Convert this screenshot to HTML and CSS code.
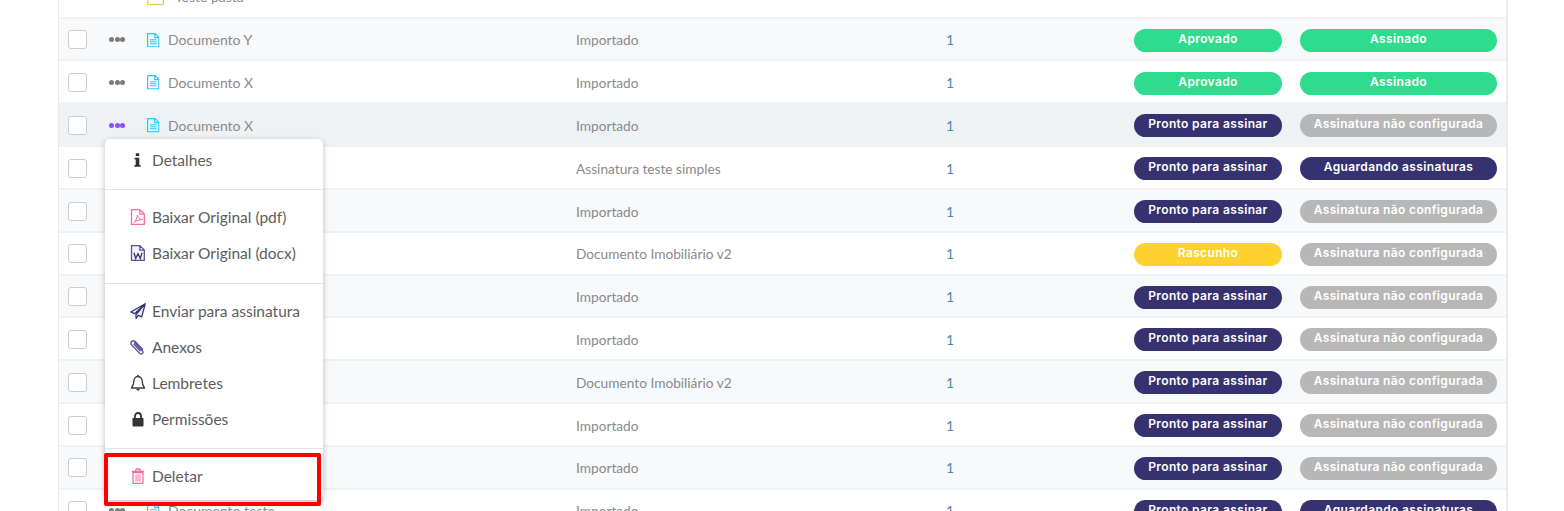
FILE: index.html
```html
<!DOCTYPE html>
<html lang="pt-BR">
<head>
    <meta charset="UTF-8">
    <title>Documentos</title>
    <link rel="stylesheet" href="styles.css">
</head>
<body>
    <svg class="defs" width="0" height="0">
        <symbol id="doc" viewBox="0 0 12.500 14.500">
            <path d="M.6.6h7.500l3.800 3.800v9.500H.6z M7.800.6v4.100h4.100" fill="none" stroke="#22c9ff" stroke-width="1.200"/>
            <path d="M3 6.800h6.500M3 8.800h6.500M3 10.800h6.500" stroke="#22c9ff" stroke-width="1.100"/>
        </symbol>
    </svg>

    <div class="table">
        <div class="row">
            <span></span><span class="dots"><i></i><i></i><i></i></span>
            <span class="name">
                <svg class="ficon folder" viewBox="0 0 17 16"><path d="M.7 1.500h5l1.500 2h9.100v11a1 1 0 0 1-1 1H1.700a1 1 0 0 1-1-1z" fill="#fff" stroke="#f3c14f" stroke-width="1.200"/></svg>
                Teste pasta
            </span>
            <span class="model"></span><span class="ver"></span><span></span><span></span>
        </div>
        <div class="row">
            <span class="check"></span><span class="dots"><i></i><i></i><i></i></span>
            <span class="name"><svg class="ficon"><use href="#doc"/></svg>Documento Y</span>
            <span class="model">Importado</span><span class="ver">1</span>
            <span class="pill green">Aprovado</span><span class="pill green">Assinado</span>
        </div>
        <div class="row">
            <span class="check"></span><span class="dots"><i></i><i></i><i></i></span>
            <span class="name"><svg class="ficon"><use href="#doc"/></svg>Documento X</span>
            <span class="model">Importado</span><span class="ver">1</span>
            <span class="pill green">Aprovado</span><span class="pill green">Assinado</span>
        </div>
        <div class="row active">
            <span class="check"></span><span class="dots"><i></i><i></i><i></i></span>
            <span class="name"><svg class="ficon"><use href="#doc"/></svg>Documento X</span>
            <span class="model">Importado</span><span class="ver">1</span>
            <span class="pill navy">Pronto para assinar</span><span class="pill gray">Assinatura não configurada</span>
        </div>
        <div class="row">
            <span class="check"></span><span class="dots"><i></i><i></i><i></i></span>
            <span class="name"></span>
            <span class="model">Assinatura teste simples</span><span class="ver">1</span>
            <span class="pill navy">Pronto para assinar</span><span class="pill navy">Aguardando assinaturas</span>
        </div>
        <div class="row">
            <span class="check"></span><span class="dots"><i></i><i></i><i></i></span>
            <span class="name"></span>
            <span class="model">Importado</span><span class="ver">1</span>
            <span class="pill navy">Pronto para assinar</span><span class="pill gray">Assinatura não configurada</span>
        </div>
        <div class="row">
            <span class="check"></span><span class="dots"><i></i><i></i><i></i></span>
            <span class="name"></span>
            <span class="model">Documento Imobiliário v2</span><span class="ver">1</span>
            <span class="pill yellow">Rascunho</span><span class="pill gray">Assinatura não configurada</span>
        </div>
        <div class="row">
            <span class="check"></span><span class="dots"><i></i><i></i><i></i></span>
            <span class="name"></span>
            <span class="model">Importado</span><span class="ver">1</span>
            <span class="pill navy">Pronto para assinar</span><span class="pill gray">Assinatura não configurada</span>
        </div>
        <div class="row">
            <span class="check"></span><span class="dots"><i></i><i></i><i></i></span>
            <span class="name"></span>
            <span class="model">Importado</span><span class="ver">1</span>
            <span class="pill navy">Pronto para assinar</span><span class="pill gray">Assinatura não configurada</span>
        </div>
        <div class="row">
            <span class="check"></span><span class="dots"><i></i><i></i><i></i></span>
            <span class="name"></span>
            <span class="model">Documento Imobiliário v2</span><span class="ver">1</span>
            <span class="pill navy">Pronto para assinar</span><span class="pill gray">Assinatura não configurada</span>
        </div>
        <div class="row">
            <span class="check"></span><span class="dots"><i></i><i></i><i></i></span>
            <span class="name"></span>
            <span class="model">Importado</span><span class="ver">1</span>
            <span class="pill navy">Pronto para assinar</span><span class="pill gray">Assinatura não configurada</span>
        </div>
        <div class="row">
            <span class="check"></span><span class="dots"><i></i><i></i><i></i></span>
            <span class="name"></span>
            <span class="model">Importado</span><span class="ver">1</span>
            <span class="pill navy">Pronto para assinar</span><span class="pill gray">Assinatura não configurada</span>
        </div>
        <div class="row">
            <span class="check"></span><span class="dots"><i></i><i></i><i></i></span>
            <span class="name"><svg class="ficon"><use href="#doc"/></svg>Documento teste</span>
            <span class="model">Importado</span><span class="ver">1</span>
            <span class="pill navy">Pronto para assinar</span><span class="pill navy">Aguardando assinaturas</span>
        </div>

        <!-- Row action menu -->
        <div class="menu">
            <div class="group first">
                <a class="item">
                    <svg class="micon" viewBox="0 0 16 16"><path d="M5.800 1.200h3.400v2.900H5.800z M4.600 5.800h4.700v7.200h1.300v1.800H4.400V13h1.300V7.600H4.600z" fill="#2f2f2f"/></svg>
                    Detalhes
                </a>
            </div>
            <div class="group second">
                <a class="item">
                    <svg class="micon" viewBox="0 0 16 16"><path d="M1.500.6h8.300l4.500 4.500v10.300H1.500z M9.800.6v4.500h4.500" fill="none" stroke="#f76c9c" stroke-width="1.300"/><path d="M3.800 13.300c2-1 3.700-4.800 3.500-7.300 0 3 2.700 4.600 5.200 4.600-3 0-6.200 1.100-8.700 2.700z" fill="none" stroke="#f76c9c" stroke-width="1"/></svg>
                    Baixar Original (pdf)
                </a>
                <a class="item">
                    <svg class="micon" viewBox="0 0 16 16"><path d="M1.500.6h8.300l4.500 4.500v10.300H1.500z M9.800.6v4.500h4.500" fill="#f3f2fa" stroke="#56559a" stroke-width="1.300"/><path d="M4 7.800l1.700 5.700L8 8.800l2.300 4.700L12 7.800" fill="none" stroke="#35336f" stroke-width="1.300"/></svg>
                    Baixar Original (docx)
                </a>
            </div>
            <div class="group third">
                <a class="item">
                    <svg class="micon" viewBox="0 0 16 16"><path d="M15.300.7L.7 9l4 1.700L15.300.7 6 11.700v3.600l2.400-2.900 3.300 1.400z" fill="#eeeef8" stroke="#35336f" stroke-width="1.300" stroke-linejoin="round"/></svg>
                    Enviar para assinatura
                </a>
                <a class="item">
                    <svg class="micon" viewBox="0 0 16 16"><path d="M4.500 3.500l8 8.500c1.500 1.700-1 4-2.700 2.400L1.700 6C-.5 3.700 2.800.2 5.200 2.500l7.300 7.800M4 5.200l6.200 6.600" fill="none" stroke="#5a5a9c" stroke-width="1.400" stroke-linecap="round"/></svg>
                    Anexos
                </a>
                <a class="item">
                    <svg class="micon" viewBox="0 0 16 16"><path d="M8 1.500c-3 0-4.200 2.400-4.200 5 0 3-1 4.500-2.300 6.500h13c-1.300-2-2.300-3.500-2.300-6.500 0-2.600-1.200-5-4.200-5z" fill="none" stroke="#3a3a3a" stroke-width="1.300" stroke-linejoin="round"/><path d="M6.300 14c.3 2 3.100 2 3.400 0z" fill="#3a3a3a"/><circle cx="8" cy="1.200" r="1.100" fill="#3a3a3a"/></svg>
                    Lembretes
                </a>
                <a class="item">
                    <svg class="micon" viewBox="0 0 16 16"><path d="M2.500 7h11v7.500a1 1 0 0 1-1 1h-9a1 1 0 0 1-1-1z" fill="#333"/><path d="M5 7.500V5a3 3 0 0 1 6 0v2.500" fill="none" stroke="#333" stroke-width="1.800"/></svg>
                    Permissões
                </a>
            </div>
            <div class="group last">
                <a class="item">
                    <svg class="micon" viewBox="0 0 16 16"><path d="M3 4.500h10v10a1 1 0 0 1-1 1H4a1 1 0 0 1-1-1z M1.800 3.500h12.400 M5.500 3l.8-2h3.400l.8 2" fill="none" stroke="#f76c9c" stroke-width="1.300"/><path d="M6 6.500v7M8 6.500v7M10 6.500v7" stroke="#f76c9c"/></svg>
                    Deletar
                </a>
            </div>
        </div>
        <div class="highlight"></div>
    </div>
</body>
</html>
```

FILE: styles.css
```css
html, body {
    margin: 0;
    height: 511px;
    overflow: hidden;
    background: #fff;
}

.defs {
    position: absolute;
}

/* Document table, scrolled so the first row is cut off */
.table {
    position: relative;
    width: 1447px;
    margin: -24.2px 0 0 58px;
    border-left: 1px solid #e8eaed;
    border-right: 2px solid #e8eaed;
    font-family: "Lato", sans-serif;
}

.row {
    display: grid;
    grid-template-columns: 41px 38px 429px 370px 188px 166px 197px;
    align-items: center;
    box-sizing: border-box;
    height: 42.82px;
    padding: 1.5px 0 0 9px;
    border-bottom: 2px solid #eff1f4;
    font-size: 14px;
    color: #8a8a8a;
}

.row:nth-child(even) {
    background: #f8f9fb;
}

.row.active {
    background: #eff2f5;
}

.check {
    box-sizing: border-box;
    width: 19px;
    height: 19px;
    background: #fff;
    border: 1px solid #ccc;
    border-radius: 3px;
}

.dots {
    display: flex;
    gap: 0.5px;
}

.dots i {
    width: 5px;
    height: 5px;
    border-radius: 50%;
    background: #7b7b7b;
}

.active .dots i {
    background: #8a4dff;
}

.name {
    display: flex;
    align-items: center;
}

.ficon {
    width: 12.5px;
    height: 14.5px;
    margin-right: 8.5px;
}

.ficon.folder {
    width: 17px;
    height: 16px;
    margin-right: 11px;
}

.model {
    font-size: 13.7px;
}

.ver {
    color: #4f86ad;
}

.pill {
    height: 23px;
    margin-top: 1px;
    box-sizing: border-box;
    border-radius: 12px;
    font-family: "Inter", sans-serif;
    font-size: 12px;
    font-weight: 600;
    letter-spacing: 0.36px;
    line-height: 20px;
    text-align: center;
    color: #fff;
    white-space: nowrap;
}

.pill:nth-last-child(2) {
    width: 148px;
}

.pill:last-child {
    width: 197px;
}

.green { background: #2fdb8c; }
.navy { background: #36326f; }
.gray { background: #b7b7b7; }
.yellow { background: #fdd22f; }

/* Dropdown menu opened from the row dots */
.menu {
    position: absolute;
    top: 163.2px;
    left: 46px;
    width: 218px;
    background: #fff;
    border-radius: 5px;
    box-shadow: 0 2px 6px rgba(0, 0, 0, 0.25);
    font-size: 15.5px;
    color: #5d5d5d;
}

.group {
    border-bottom: 1px solid #e4e4e4;
}

.group.first { padding: 3px 0 11px; }
.group.second { padding: 9px 0 12px; }
.group.third { padding: 9px 0 11px; }
.group.last { padding: 9px 0 6px; border-bottom: 0; }

.item {
    display: flex;
    align-items: center;
    height: 36px;
    padding-left: 25px;
}

.micon {
    width: 16px;
    height: 16px;
    margin-right: 6px;
}

/* Red annotation box drawn on top of the screenshot */
.highlight {
    position: absolute;
    top: 477px;
    left: 45px;
    box-sizing: border-box;
    width: 217px;
    height: 53px;
    border: 4px solid #f00;
    border-radius: 2px;
}
```
